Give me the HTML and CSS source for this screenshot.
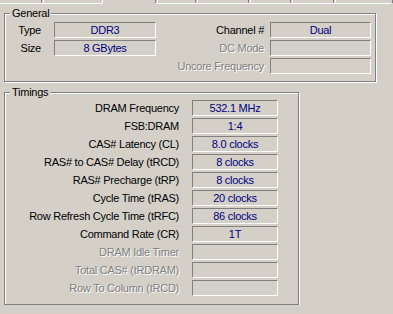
FILE: index.html
```html
<!DOCTYPE html>
<html lang="en">
<head>
    <meta charset="UTF-8">
    <title>Memory</title>
    <link rel="stylesheet" href="styles.css">
</head>
<body>
    <!-- bottoms of the tab strip, Memory tab selected -->
    <div class="tabs">
        <span class="tab t1"></span>
        <span class="tab t2"></span>
        <span class="tab t3 selected"></span>
        <span class="tab t4"></span>
        <span class="tab t5"></span>
        <span class="tab t6"></span>
        <span class="tab t7"></span>
        <span class="tab t8"></span>
    </div>

    <!-- General -->
    <div class="group general">
        <span class="legend">General</span>
        <div class="general-grid">
            <span class="lbl">Type</span>
            <span class="field">DDR3</span>
            <span class="lbl right">Channel #</span>
            <span class="field">Dual</span>

            <span class="lbl">Size</span>
            <span class="field">8 GBytes</span>
            <span class="lbl right off">DC Mode</span>
            <span class="field"></span>

            <span></span>
            <span></span>
            <span class="lbl right off">Uncore Frequency</span>
            <span class="field"></span>
        </div>
    </div>

    <!-- Timings -->
    <div class="group timings">
        <span class="legend">Timings</span>
        <div class="timings-grid">
            <span class="lbl">DRAM Frequency</span>
            <span class="field">532.1 MHz</span>
            <span class="lbl">FSB:DRAM</span>
            <span class="field">1:4</span>
            <span class="lbl">CAS# Latency (CL)</span>
            <span class="field">8.0 clocks</span>
            <span class="lbl">RAS# to CAS# Delay (tRCD)</span>
            <span class="field">8 clocks</span>
            <span class="lbl">RAS# Precharge (tRP)</span>
            <span class="field">8 clocks</span>
            <span class="lbl">Cycle Time (tRAS)</span>
            <span class="field">20 clocks</span>
            <span class="lbl">Row Refresh Cycle Time (tRFC)</span>
            <span class="field">86 clocks</span>
            <span class="lbl">Command Rate (CR)</span>
            <span class="field">1T</span>
            <span class="lbl off">DRAM Idle Timer</span>
            <span class="field"></span>
            <span class="lbl off">Total CAS# (tRDRAM)</span>
            <span class="field"></span>
            <span class="lbl off">Row To Column (tRCD)</span>
            <span class="field"></span>
        </div>
    </div>
</body>
</html>
```

FILE: styles.css
```css
body {
    margin: 0;
    background: #d4d0c8;
    font-family: "Liberation Sans", Arial, sans-serif;
    font-size: 11px;
    letter-spacing: -0.25px;
    color: #000;
}
.tabs {
    display: flex;
    height: 4px;
    background: linear-gradient(to right, #fff 0 102px, transparent 102px 156px, #fff 156px 391px, transparent 391px) left bottom / 100% 1px no-repeat;
}
.tab {
    box-sizing: border-box;
    height: 3px;
    border-left: 1px solid #fff;
    border-right: 1px solid #808080;
    margin-left: 1px;
}
.t1 { width: 42px; margin-left: 0; border-left: none; }
.t2 { width: 59px; border-right: none; }
.t3 { width: 54px; margin-left: 0; }
.t4 { width: 39px; }
.t5 { width: 52px; }
.t6 { width: 41px; }
.t7 { width: 42px; }
.t8 { width: 58px; }

.group {
    position: relative;
    box-sizing: border-box;
    margin-left: 4px;
    border: 1px solid #808080;
    box-shadow: inset 1px 1px 0 #fff, 1px 1px 0 #fff;
}
.legend {
    position: absolute;
    top: -7px;
    left: 5px;
    padding: 0 2px;
    line-height: 13px;
    background: #d4d0c8;
}
.general {
    width: 372px;
    margin-top: 9px;
}
.timings {
    width: 295px;
    margin-top: 10px;
}
.general-grid {
    display: grid;
    grid-template-columns: 49px 102px 114px 101px;
    grid-auto-rows: 16px;
    row-gap: 2px;
    padding: 8px 0 7px 0;
}
.timings-grid {
    display: grid;
    grid-template-columns: 187px 86px;
    grid-auto-rows: 16px;
    row-gap: 2px;
    padding: 7px 0 8px 0;
}
.lbl {
    text-align: right;
    padding-right: 13px;
    line-height: 16px;
    white-space: nowrap;
}
.lbl.right {
    padding-right: 6px;
}
.lbl.off {
    color: #808080;
    text-shadow: 1px 1px 0 #fff;
}
.field {
    box-sizing: border-box;
    border: 1px solid;
    border-color: #808080 #fff #fff #808080;
    color: #000080;
    text-align: center;
    line-height: 14px;
    white-space: nowrap;
}
```
